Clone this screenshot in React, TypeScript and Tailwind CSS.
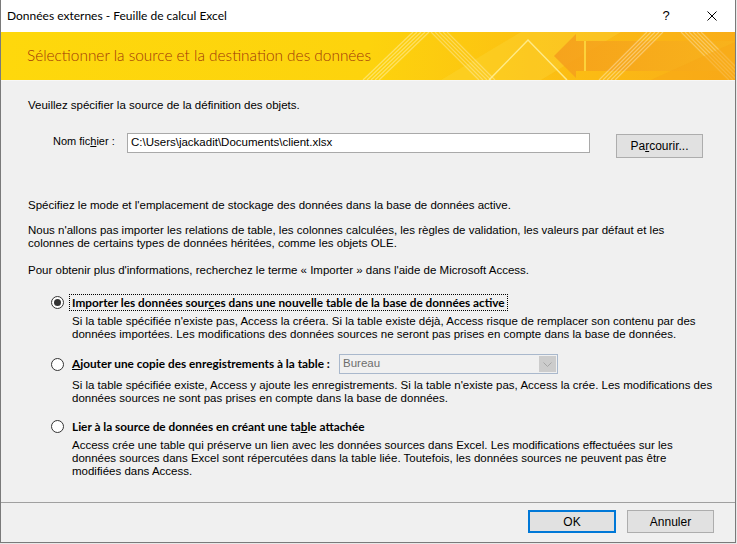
import React from "react";

const body = "font-['Liberation_Sans',Arial,sans-serif] text-[11.5px] leading-[13px] text-black whitespace-nowrap";
const ui = "font-['Lato','Liberation_Sans',sans-serif]";

function Radio({ checked }: { checked?: boolean }) {
  return (
    <span className="w-[13px] h-[13px] rounded-full border border-[#333333] bg-white flex items-center justify-center shrink-0">
      {checked && <span className="w-[7px] h-[7px] rounded-full bg-[#333333]" />}
    </span>
  );
}

function Banner() {
  const stripes = (x0: number, x1: number, y0: number, y1: number, n: number, gap: number, op: number) =>
    Array.from({ length: n }).map((_, i) => (
      <line key={i} x1={x0 + i * gap} y1={y0} x2={x1 + i * gap} y2={y1} stroke="#ffffff" strokeOpacity={op} strokeWidth={1.3} />
    ));
  return (
    <svg className="absolute inset-0" width="734" height="48" viewBox="0 0 734 48">
      <defs>
        <linearGradient id="bg" x1="0" y1="0" x2="1" y2="0">
          <stop offset="0" stopColor="#fed80c" />
          <stop offset="0.5" stopColor="#fdd30d" />
          <stop offset="0.72" stopColor="#fcc112" />
          <stop offset="1" stopColor="#f9ad18" />
        </linearGradient>
        <linearGradient id="ar" x1="0" y1="0" x2="1" y2="0">
          <stop offset="0" stopColor="#f59d1c" />
          <stop offset="1" stopColor="#f8b41c" />
        </linearGradient>
      </defs>
      <rect width="734" height="48" fill="url(#bg)" />
      <polygon points="440,48 520,0 620,0 540,48" fill="#fde04a" fillOpacity="0.25" />
      {stripes(362, 412, 48, 0, 5, 4, 0.35)}
      {stripes(430, 478, 0, 48, 5, 4, 0.3)}
      <polyline points="488,48 527,8 566,48" fill="none" stroke="#fff2a0" strokeOpacity="0.8" strokeWidth="1.5" />
      <polygon points="553,24 575,2 575,9 733,9 733,39 575,39 575,46" fill="url(#ar)" fillOpacity="0.85" />
      <line x1="584" y1="9" x2="584" y2="39" stroke="#fcd23a" strokeWidth="2" />
      {stripes(598, 646, 48, 0, 5, 4, 0.35)}
      {stripes(680, 728, 0, 48, 6, 4, 0.3)}
      <polygon points="650,48 734,48 734,10" fill="#f7a516" fillOpacity="0.5" />
    </svg>
  );
}

export default function App() {
  return (
    <div className="w-[737px] h-[544px] bg-[#e8e8e8] overflow-hidden">
      <div className="w-[736px] h-[543px] flex flex-col border-l border-r border-b border-[#7a7a7a] bg-[#f0f0f0]">
        {/* Title bar */}
        <div className="h-[32px] bg-white flex items-center shrink-0">
          <div className={`${ui} text-[12px] text-black pl-[6px] flex-1`}>Données externes - Feuille de calcul Excel</div>
          <div className="w-[46px] h-full flex items-center justify-center font-['Liberation_Sans',sans-serif] text-[13px] text-black">?</div>
          <div className="w-[46px] h-full flex items-center justify-center">
            <svg width="10" height="10" viewBox="0 0 10 10">
              <path d="M0.5 0.5 L9.5 9.5 M9.5 0.5 L0.5 9.5" stroke="#000" strokeWidth="1" />
            </svg>
          </div>
        </div>
        {/* Banner */}
        <div className="relative h-[48px] shrink-0 overflow-hidden flex items-center">
          <Banner />
          <div className={`relative ${ui} font-light text-[15.4px] text-[#a0360a] pl-[26px]`}>
            Sélectionner la source et la destination des données
          </div>
        </div>
        {/* Content */}
        <div className="h-[422px] shrink-0 flex flex-col border-t border-[#f7f7f7]">
          <div className={`${body} ml-[27px] mt-[18px] h-[13px]`}>Veuillez spécifier la source de la définition des objets.</div>
          <div className="flex mt-[21px] h-[25px] ml-[52px]">
            <div className="font-['Liberation_Sans',sans-serif] text-[11px] leading-[13px] text-black whitespace-nowrap w-[74px] pt-[2px]">
              Nom fic<span className="underline">h</span>ier :
            </div>
            <div className="w-[463px] h-[20px] bg-white border border-[#a9a9a9] flex items-center pl-[3px] font-['Liberation_Sans',sans-serif] text-[11.5px] text-black">
              C:\Users\jackadit\Documents\client.xlsx
            </div>
            <div className="ml-[26px] mt-[1px] w-[87px] h-[24px] bg-[#e1e1e1] border border-[#adadad] flex items-center justify-center font-['Liberation_Sans',sans-serif] text-[12px] text-black">
              Pa<span className="underline">r</span>courir...
            </div>
          </div>
          <div className={`${body} ml-[27px] mt-[41px] h-[13px]`}>
            Spécifiez le mode et l'emplacement de stockage des données dans la base de données active.
          </div>
          <div className={`${body} ml-[27px] mt-[12px] h-[26px]`}>
            Nous n'allons pas importer les relations de table, les colonnes calculées, les règles de validation, les valeurs par défaut et les
            <br />
            colonnes de certains types de données héritées, comme les objets OLE.
          </div>
          <div className={`${body} ml-[27px] mt-[14px] h-[13px]`}>
            Pour obtenir plus d'informations, recherchez le terme « Importer » dans l'aide de Microsoft Access.
          </div>

          {/* Option 1 */}
          <div className="flex items-center ml-[50px] mt-[17px] h-[17px]">
            <Radio checked />
            <div className={`ml-[5px] h-[17px] border border-dotted border-black px-[2px] flex items-center ${ui} font-bold text-[11.8px] text-black whitespace-nowrap`}>
              Importer les données sour<span className="underline">c</span>es dans une nouvelle table de la base de données active
            </div>
          </div>
          <div className={`${body} ml-[71px] mt-[4px] h-[26px]`}>
            Si la table spécifiée n'existe pas, Access la créera. Si la table existe déjà, Access risque de remplacer son contenu par des
            <br />
            données importées. Les modifications des données sources ne seront pas prises en compte dans la base de données.
          </div>

          {/* Option 2 */}
          <div className="flex items-center ml-[50px] mt-[13px] h-[20px]">
            <Radio />
            <div className={`ml-[5px] w-[270px] px-[3px] ${ui} font-bold text-[11.8px] text-black whitespace-nowrap`}>
              <span className="underline">A</span>jouter une copie des enregistrements à la table :
            </div>
            <div className="w-[219px] h-[20px] border border-[#a9b8cc] bg-[#f0f0f0] flex items-center">
              <span className="pl-[3px] font-['Liberation_Sans',sans-serif] text-[11.5px] text-[#6d6d6d]">Bureau</span>
              <div className="ml-auto mr-[1px] w-[17px] h-[16px] bg-[#cccccc] flex items-center justify-center">
                <svg width="9" height="5" viewBox="0 0 9 5">
                  <path d="M0.5 0.5 L4.5 4.5 L8.5 0.5" fill="none" stroke="#a6a6a6" strokeWidth="1" />
                </svg>
              </div>
            </div>
          </div>
          <div className={`${body} ml-[71px] mt-[5px] h-[26px]`}>
            Si la table spécifiée existe, Access y ajoute les enregistrements. Si la table n'existe pas, Access la crée. Les modifications des
            <br />
            données sources ne sont pas prises en compte dans la base de données.
          </div>

          {/* Option 3 */}
          <div className="flex items-center ml-[50px] mt-[13px] h-[17px]">
            <Radio />
            <div className={`ml-[5px] px-[3px] ${ui} font-bold text-[11.8px] text-black whitespace-nowrap`}>
              Lier à la source de données en créant une ta<span className="underline">b</span>le attachée
            </div>
          </div>
          <div className={`${body} ml-[71px] mt-[4px] h-[39px]`}>
            Access crée une table qui préserve un lien avec les données sources dans Excel. Les modifications effectuées sur les
            <br />
            données sources dans Excel sont répercutées dans la table liée. Toutefois, les données sources ne peuvent pas être
            <br />
            modifiées dans Access.
          </div>
        </div>
        {/* Footer */}
        <div className="flex-1 border-t border-[#a0a0a0] flex justify-end items-start pt-[7px] pr-[21px] gap-[11px]">
          <div className="w-[88px] h-[23px] bg-[#e1e1e1] border-2 border-[#0078d7] flex items-center justify-center font-['Liberation_Sans',sans-serif] text-[12px] text-black">
            OK
          </div>
          <div className="w-[87px] h-[23px] bg-[#e1e1e1] border border-[#adadad] flex items-center justify-center font-['Liberation_Sans',sans-serif] text-[12px] text-black">
            Annuler
          </div>
        </div>
      </div>
    </div>
  );
}
